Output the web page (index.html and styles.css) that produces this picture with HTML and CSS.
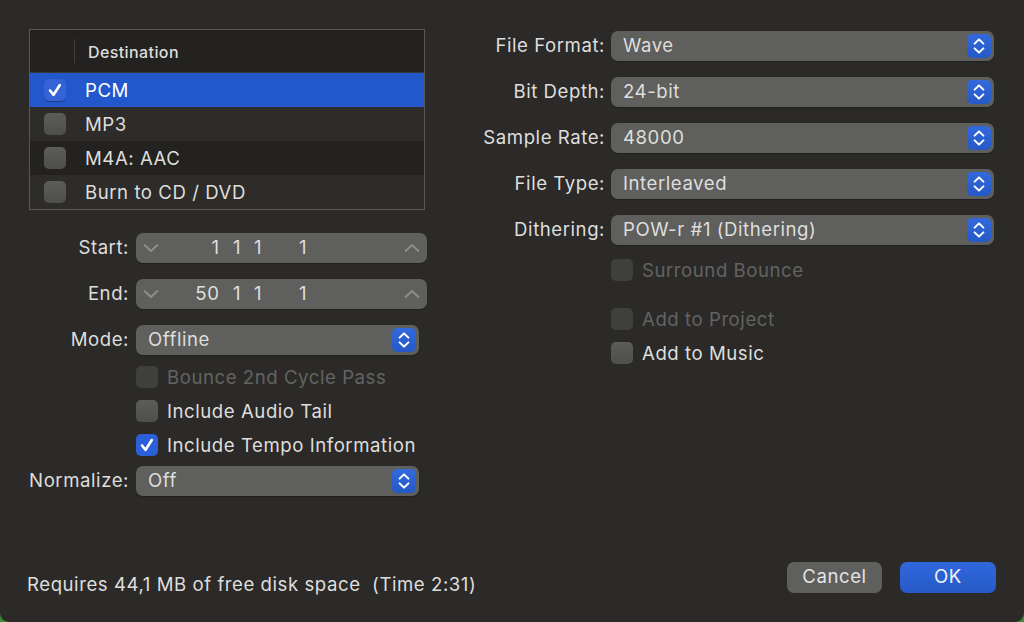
FILE: index.html
```html
<!DOCTYPE html>
<html lang="en">
<head>
<meta charset="utf-8">
<title>Bounce</title>
<link rel="stylesheet" href="styles.css">
</head>
<body>
<svg class="defs" width="0" height="0" aria-hidden="true">
  <symbol id="tick" viewBox="0 0 22 22"><path d="M6 11.5l3.6 4.3L15.8 6" fill="none" stroke="#fff" stroke-width="2.6" stroke-linecap="round" stroke-linejoin="round"/></symbol>
  <symbol id="updown" viewBox="0 0 24 24"><path d="M7.6 9.6L12 5.4l4.4 4.2M7.6 14.4L12 18.6l4.4-4.2" fill="none" stroke="#fff" stroke-width="2" stroke-linecap="round" stroke-linejoin="round"/></symbol>
  <symbol id="chev-down" viewBox="0 0 16 10"><path d="M1.5 2l6.5 6 6.5-6" fill="none" stroke="#8f8f8d" stroke-width="1.8" stroke-linecap="round" stroke-linejoin="round"/></symbol>
  <symbol id="chev-up" viewBox="0 0 16 10"><path d="M1.5 8l6.5-6 6.5 6" fill="none" stroke="#8f8f8d" stroke-width="1.8" stroke-linecap="round" stroke-linejoin="round"/></symbol>
</svg>
<main class="dialog">
  <div class="content">
    <section class="left">
      <div class="table">
        <div class="thead"><span class="thead-check"></span><span class="thead-title">Destination</span></div>
        <div class="row selected"><span class="box on-row"><svg class="tick"><use href="#tick"/></svg></span><span>PCM</span></div>
        <div class="row"><span class="box"></span><span>MP3</span></div>
        <div class="row alt"><span class="box"></span><span>M4A: AAC</span></div>
        <div class="row last"><span class="box"></span><span>Burn to CD / DVD</span></div>
      </div>
      <div class="form form-left">
        <label class="lbl">Start:</label>
        <div class="stepper"><svg class="chev first"><use href="#chev-down"/></svg><div class="segs"><span>1</span><span>1</span><span>1</span><span>1</span></div><svg class="chev last-chev"><use href="#chev-up"/></svg></div>
        <label class="lbl gap-end">End:</label>
        <div class="stepper gap-end"><svg class="chev first"><use href="#chev-down"/></svg><div class="segs"><span>50</span><span>1</span><span>1</span><span>1</span></div><svg class="chev last-chev"><use href="#chev-up"/></svg></div>
        <label class="lbl gap-end">Mode:</label>
        <div class="select short gap-end"><span>Offline</span><span class="blue"><svg class="ud"><use href="#updown"/></svg></span></div>
        <div class="check-cell c1 dim"><span class="box dis"></span><span>Bounce 2nd Cycle Pass</span></div>
        <div class="check-cell c2"><span class="box"></span><span>Include Audio Tail</span></div>
        <div class="check-cell c2"><span class="box checked"><svg class="tick"><use href="#tick"/></svg></span><span>Include Tempo Information</span></div>
        <label class="lbl norm">Normalize:</label>
        <div class="select short norm"><span>Off</span><span class="blue"><svg class="ud"><use href="#updown"/></svg></span></div>
      </div>
    </section>
    <section class="right">
      <div class="form form-right">
        <label class="lbl">File Format:</label>
        <div class="select"><span>Wave</span><span class="blue"><svg class="ud"><use href="#updown"/></svg></span></div>
        <label class="lbl">Bit Depth:</label>
        <div class="select"><span>24-bit</span><span class="blue"><svg class="ud"><use href="#updown"/></svg></span></div>
        <label class="lbl">Sample Rate:</label>
        <div class="select"><span>48000</span><span class="blue"><svg class="ud"><use href="#updown"/></svg></span></div>
        <label class="lbl">File Type:</label>
        <div class="select"><span>Interleaved</span><span class="blue"><svg class="ud"><use href="#updown"/></svg></span></div>
        <label class="lbl">Dithering:</label>
        <div class="select"><span>POW-r #1 (Dithering)</span><span class="blue"><svg class="ud"><use href="#updown"/></svg></span></div>
      </div>
      <div class="right-checks">
        <div class="check-line dim"><span class="box dis"></span><span>Surround Bounce</span></div>
        <div class="check-line dim project"><span class="box dis"></span><span>Add to Project</span></div>
        <div class="check-line music"><span class="box"></span><span>Add to Music</span></div>
      </div>
    </section>
  </div>
  <footer class="footer">
    <span class="status">Requires 44,1 MB of free disk space&nbsp; (Time 2:31)</span>
    <div class="buttons">
      <button class="btn">Cancel</button>
      <button class="btn primary">OK</button>
    </div>
  </footer>
</main>
</body>
</html>
```

FILE: styles.css
```css
* { box-sizing: border-box; }
html, body { margin: 0; height: 100%; background: #3a8a38; }
body {
  width: 1024px;
  height: 622px;
  overflow: hidden;
  font-family: Inter, "Liberation Sans", sans-serif;
  font-size: 18.6px;
  letter-spacing: .55px;
  color: #dededc;
}
.defs { position: absolute; }
.dialog {
  width: 1024px;
  height: 622px;
  background: #2b2a29;
  border-radius: 0 0 9px 9px;
  display: flex;
  flex-direction: column;
}
.content { display: flex; padding: 29px 0 0 29px; }
.left { width: 398px; }
.right { margin-left: 43px; padding-top: 2px; }

.table {
  width: 396px;
  height: 181px;
  border: 1px solid #575755;
  background: #2d2c2b;
}
.thead {
  height: 43px;
  display: flex;
  align-items: center;
  background: #232220;
  border-bottom: 1px solid #3a3a38;
  font-size: 16px;
  font-weight: 500;
  letter-spacing: .4px;
}
.thead-check { width: 45px; height: 24px; border-right: 1px solid #3f3f3d; }
.thead-title { margin-left: 13px; padding-top: 2px; }
.row {
  height: 34px;
  display: flex;
  align-items: center;
  gap: 19px;
  padding-left: 14px;
}
.row.selected { background: #2358cc; color: #fff; }
.row.alt { background: #232220; }
.row.last { height: 33px; }

.box {
  flex: none;
  width: 22px;
  height: 22px;
  border-radius: 5px;
  background: linear-gradient(#5c5c5a, #4e4e4c);
  display: block;
}
.box.dis { background: #3f3f3d; }
.box.checked { background: #2c60d8; }
.box.on-row { background: #3563d6; box-shadow: 0 1px 1px rgba(0,0,0,.3); }
.tick { width: 22px; height: 22px; display: block; }

.form { display: grid; align-items: center; }
.form-left {
  grid-template-columns: 100px 291px;
  column-gap: 7px;
  margin-top: 23px;
}
.form-right {
  grid-template-columns: 135px 383px;
  column-gap: 6px;
  row-gap: 16px;
}
.lbl { text-align: right; white-space: nowrap; line-height: 28px; padding-bottom: 2px; }
.gap-end { margin-top: 16px; }

.stepper {
  height: 30px;
  padding-bottom: 2px;
  background: #5f5f5d;
  border-radius: 7px;
  display: flex;
  align-items: center;
  box-shadow: 0 1px 1px rgba(0,0,0,.25);
}
.chev { width: 16px; height: 10px; flex: none; margin-top: 2px; }
.chev.first { margin-left: 7px; }
.chev.last-chev { margin-left: auto; margin-right: 7px; }
.segs {
  display: grid;
  grid-template-columns: 60.5px 21.5px 21px 45px;
  text-align: right;
}
.select {
  height: 30px;
  background: #5f5f5d;
  border-radius: 7px;
  display: flex;
  align-items: center;
  justify-content: space-between;
  padding: 0 3px 0 12px;
  line-height: 28px;
  box-shadow: 0 1px 1px rgba(0,0,0,.25);
}
.select > span:first-child { margin-top: -2px; }
.select.short { width: 283px; }
.blue {
  width: 24px;
  height: 24px;
  border-radius: 5px;
  background: linear-gradient(#3269dc, #2659c6);
  display: block;
}
.ud { width: 24px; height: 24px; display: block; }

.check-cell {
  grid-column: 2;
  display: flex;
  align-items: center;
  gap: 9px;
  height: 22px;
  white-space: nowrap;
}
.check-cell > span:last-child, .check-line > span:last-child { margin-top: -1px; }
.c1 { margin-top: 11px; }
.c2 { margin-top: 12px; }
.norm { margin-top: 10px; }
.dim { color: #636361; }

.right-checks { margin-left: 141px; margin-top: 14px; }
.check-line { display: flex; align-items: center; gap: 9px; height: 22px; }
.project { margin-top: 27px; }
.music { margin-top: 12px; }

.footer {
  margin-top: auto;
  display: flex;
  justify-content: space-between;
  align-items: flex-end;
  padding: 0 28px 29px 27px;
}
.status { margin-bottom: -2px; }
.buttons { display: flex; gap: 18px; }
.btn {
  width: 95px;
  height: 31px;
  border: 0;
  border-radius: 7px;
  background: #5f5f5d;
  color: #e4e4e2;
  font: inherit;
  letter-spacing: inherit;
  padding: 0 0 3px;
}
.btn.primary { width: 96px; background: linear-gradient(#3068dc, #2659c6); color: #f2f2f2; }
```
